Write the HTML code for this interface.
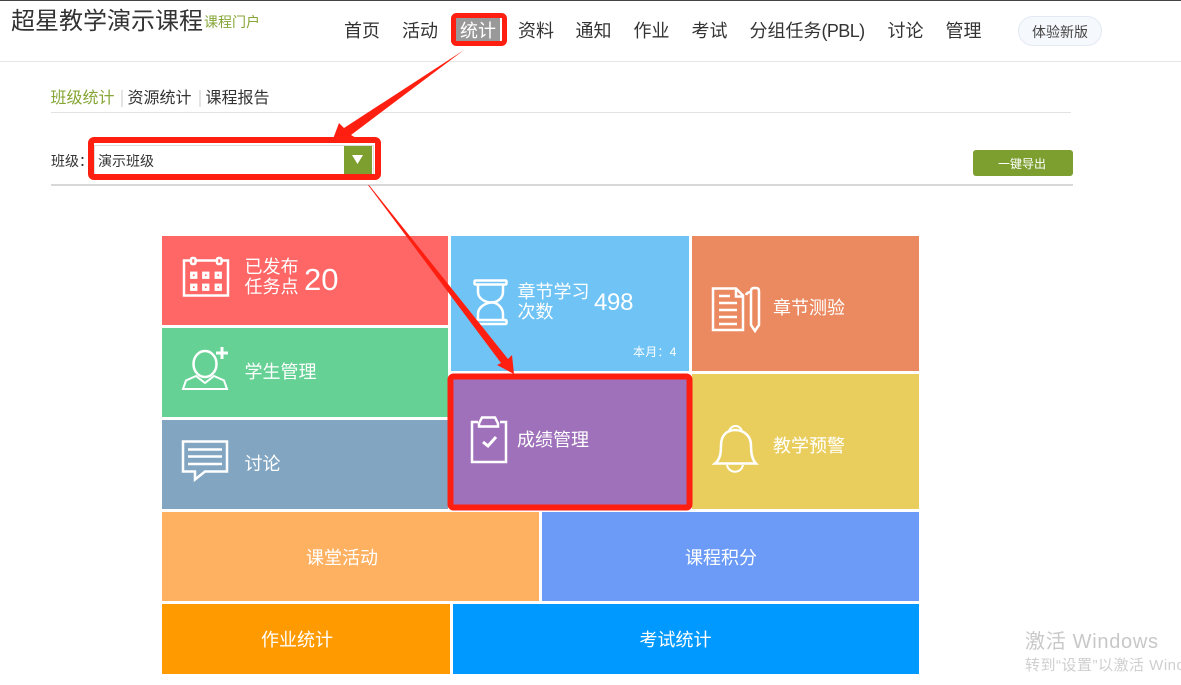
<!DOCTYPE html>
<html lang="zh-CN">
<head>
<meta charset="utf-8">
<title>班级统计</title>
<style>
html,body{margin:0;padding:0;background:#fff;width:1181px;height:685px;overflow:hidden}
body{position:relative;font-family:"Liberation Sans","Noto Sans CJK SC",sans-serif;color:#333}
.b,.t{position:absolute}
.t{white-space:nowrap;line-height:24px;height:24px}
.w{color:#fff;font-size:18px}
.n{font-size:18px;color:#333;top:19px}
svg{position:absolute;left:0;top:0}
</style>
</head>
<body>
<div class="b" style="left:0;top:0;width:1181px;height:1px;background:#444"></div>
<div class="b" style="left:0;top:61px;width:1181px;height:1px;background:#e6e6e6"></div>
<div class="t" style="left:11px;top:10px;font-size:24px;color:#333">超星教学演示课程</div>
<div class="t" style="left:204px;top:10px;font-size:14px;color:#86a637">课程门户</div>

<div class="b" style="left:456px;top:17px;width:44px;height:24px;background:#999"></div>
<div class="t n" style="left:344px">首页</div>
<div class="t n" style="left:402px">活动</div>
<div class="t n" style="left:460px;color:#fff">统计</div>
<div class="t n" style="left:518px">资料</div>
<div class="t n" style="left:575.500px">通知</div>
<div class="t n" style="left:633.500px">作业</div>
<div class="t n" style="left:691.500px">考试</div>
<div class="t n" style="left:749.500px">分组任务<span style="letter-spacing:-.6px">(PBL)</span></div>
<div class="t n" style="left:887.500px">讨论</div>
<div class="t n" style="left:945.500px">管理</div>
<div class="b" style="left:1018px;top:16px;width:82px;height:28px;border:1px solid #e3e9f3;border-radius:15px;background:#f5f8fd"></div>
<div class="t" style="left:1032px;top:20px;font-size:14px;color:#444">体验新版</div>

<div class="t" style="left:50.500px;top:87px;font-size:16px;color:#86a637">班级统计</div>
<div class="b" style="left:121px;top:90px;width:2px;height:17px;background:#e4e4e4"></div>
<div class="t" style="left:127.500px;top:87px;font-size:16px">资源统计</div>
<div class="b" style="left:199px;top:90px;width:2px;height:17px;background:#e4e4e4"></div>
<div class="t" style="left:205.500px;top:87px;font-size:16px">课程报告</div>
<div class="b" style="left:51px;top:112px;width:1020px;height:1px;background:#e3e3e3"></div>

<div class="t" style="left:51px;top:149px;font-size:14px">班级：</div>
<div class="b" style="left:94px;top:145px;width:278px;height:28px;background:#fff;border:1px solid #ddd;box-sizing:content-box"></div>
<div class="t" style="left:98px;top:149px;font-size:14px">演示班级</div>
<div class="b" style="left:344px;top:146px;width:28px;height:28px;background:#7c9f30"></div>
<div class="b" style="left:973px;top:150px;width:100px;height:26px;border-radius:3px;background:#7c9f30"></div>
<div class="t" style="left:998px;top:152px;font-size:12px;color:#fff">一键导出</div>
<div class="b" style="left:51px;top:184px;width:1022px;height:2px;background:#d8d8d8"></div>

<div class="b" style="left:162px;top:236px;width:286px;height:89px;background:#ff6666"></div>
<div class="b" style="left:162px;top:328px;width:286px;height:89px;background:#66d194"></div>
<div class="b" style="left:162px;top:420px;width:286px;height:89px;background:#82a6c2"></div>
<div class="b" style="left:451px;top:236px;width:238px;height:135px;background:#6fc3f5"></div>
<div class="b" style="left:692px;top:236px;width:227px;height:135px;background:#eb8a60"></div>
<div class="b" style="left:451px;top:374px;width:238px;height:135px;background:#a071bb"></div>
<div class="b" style="left:692px;top:374px;width:227px;height:135px;background:#e9ce5e"></div>
<div class="b" style="left:162px;top:512px;width:377px;height:89px;background:#ffb162"></div>
<div class="b" style="left:542px;top:512px;width:377px;height:89px;background:#6b9bf7"></div>
<div class="b" style="left:162px;top:604px;width:288px;height:70px;background:#ff9a00"></div>
<div class="b" style="left:453px;top:604px;width:466px;height:70px;background:#0099ff"></div>

<div class="t w" style="left:244.500px;top:257px;line-height:20px;height:40px">已发布<br>任务点</div>
<div class="t w" style="left:304px;top:268px;font-size:31px">20</div>
<div class="t w" style="left:244.500px;top:360px">学生管理</div>
<div class="t w" style="left:244.500px;top:452px">讨论</div>
<div class="t w" style="left:517.500px;top:282px;line-height:20px;height:40px">章节学习<br>次数</div>
<div class="t w" style="left:594px;top:291px;font-size:24px;letter-spacing:-.3px">498</div>
<div class="t w" style="left:633px;top:340px;font-size:12px;letter-spacing:.2px">本月：4</div>
<div class="t w" style="left:773px;top:296px">章节测验</div>
<div class="t w" style="left:517px;top:428px">成绩管理</div>
<div class="t w" style="left:773px;top:434px">教学预警</div>
<div class="t w" style="left:306px;top:546px">课堂活动</div>
<div class="t w" style="left:685px;top:546px">课程积分</div>
<div class="t w" style="left:261px;top:628px">作业统计</div>
<div class="t w" style="left:639.500px;top:628px">考试统计</div>

<div class="t" style="left:1025px;top:630px;font-size:20px;color:#c8c8c8;letter-spacing:.7px">激活 Windows</div>
<div class="t" style="left:1025px;top:654px;font-size:15px;color:#cfcfcf;letter-spacing:.5px">转到“设置”以激活 Windows。</div>

<svg width="1181" height="685" viewBox="0 0 1181 685" fill="none" stroke="#fff" stroke-width="2.500">
  <!-- calendar -->
  <path d="M190 260.500h-6v35h44v-35h-6M196 260.500h20"/>
  <rect x="191" y="258" width="4.500" height="6" rx="1.500"/>
  <rect x="217" y="258" width="4.500" height="6" rx="1.500"/>
  <g stroke-width="2.800">
    <rect x="191.500" y="273" width="4.500" height="4.500"/><rect x="203.500" y="273" width="4.500" height="4.500"/><rect x="216" y="273" width="4.500" height="4.500"/>
    <rect x="191.500" y="285" width="4.500" height="4.500"/><rect x="203.500" y="285" width="4.500" height="4.500"/><rect x="216" y="285" width="4.500" height="4.500"/>
  </g>
  <!-- user -->
  <ellipse cx="205" cy="364" rx="11.500" ry="13"/>
  <path d="M196 376l-10 4.500-3 8.500h44l-3-8.500-10-4.500-9 7z" stroke-width="2"/>
  <path d="M222 347v12M216 353h12" stroke-width="3"/>
  <!-- chat -->
  <path d="M183 441.500h44v30h-22l-10 8v-8h-12z"/>
  <path d="M188 449.500h34M188 456.500h34M188 464h34"/>
  <!-- hourglass -->
  <rect x="474.500" y="280.500" width="32" height="4" rx="1"/>
  <rect x="474.500" y="320" width="32" height="4" rx="1"/>
  <path d="M478 285v7c0 6 6 10 12.500 10.500s12.500-4.500 12.500-10.500v-7"/>
  <path d="M478 320v-6c0-6 6-10.500 12.500-11.500s12.500 5.500 12.500 11.500v6"/>
  <!-- clipboard -->
  <path d="M478 422h-6v40h34v-40h-6"/>
  <path d="M479 426.500h19v-3l-3-6h-13l-3 6z"/>
  <path d="M483 442l5 4 8-9" stroke-width="3"/>
  <!-- doc -->
  <path d="M713 288.500h23l7 7v34.500h-30zM736 288.500v8h7"/>
  <path d="M719 296h11M719 303h18M719 310h18M719 317h18M719 324h18"/>
  <!-- pen -->
  <path d="M751 325v-34q0-3 3-3h2q3 0 3 3v34l-4 6z"/>
  <path d="M746 295q1-3 5-3"/>
  <!-- bell -->
  <path d="M715 463.500h41c-4-4-5-10-5-18 0-9-6-15-15.500-15.500C726 430 721 436 721 445.500c0 8-1 14-6 18z"/>
  <path d="M729 432c1-8 12-8 13 0" stroke-width="2"/>
  <path d="M727 465c2 9 14 9 16 0" stroke-width="2"/>
  <!-- select dropdown arrow -->
  <path d="M352 155h11l-5.500 9z" fill="#fff" stroke="none"/>
</svg>

<svg width="1181" height="685" viewBox="0 0 1181 685">
  <rect x="453.500" y="15.500" width="51" height="28" rx="3" fill="none" stroke="#ff1f10" stroke-width="5"/>
  <rect x="91" y="140" width="287" height="37" rx="3" fill="none" stroke="#ff1f10" stroke-width="6"/>
  <rect x="450.500" y="376.500" width="239" height="131" rx="3" fill="none" stroke="#ff1f10" stroke-width="6"/>
  <polygon points="464,50 351,135 358,139 333,139 339,123 344,128" fill="#ff1f10"/>
  <polygon points="368,185 369,185 508,359 512,355 514,374 497,365 501,363" fill="#ff1f10"/>
</svg>
</body>
</html>
